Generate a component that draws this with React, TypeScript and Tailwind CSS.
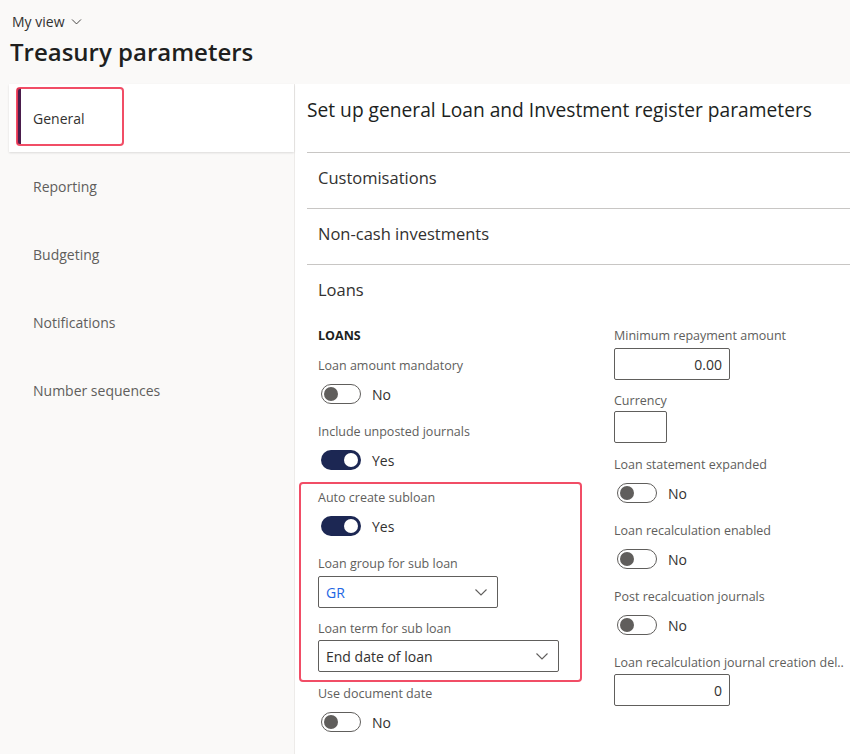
import React from 'react';

const FONT = { fontFamily: '"Segoe UI", "Open Sans", sans-serif' };

const Chevron = ({ className }: { className?: string }) => (
  <svg className={className} viewBox="0 0 16 16" fill="none" stroke="currentColor" strokeWidth="1.1">
    <path d="M2.5 5.5L8 11l5.5-5.5" />
  </svg>
);

const Toggle = ({ on }: { on: boolean }) => (
  <div className="flex items-center h-[20px] mt-[8px]">
    {on ? (
      <div className="w-[40px] h-[20px] rounded-full bg-[#1c2753] flex items-center justify-end pr-[3px] ml-[3px]">
        <div className="w-[14px] h-[14px] rounded-full bg-white" />
      </div>
    ) : (
      <div className="w-[40px] h-[20px] rounded-full border border-[#605e5c] flex items-center pl-[2px] ml-[3px]">
        <div className="w-[14px] h-[14px] rounded-full bg-[#605e5c]" />
      </div>
    )}
    <span className="ml-[11px] text-[14px] text-[#323130]">{on ? 'Yes' : 'No'}</span>
  </div>
);

const Label = ({ children }: { children: React.ReactNode }) => (
  <div className="h-[20px] leading-[20px] text-[12.5px] text-[#605e5c] whitespace-nowrap">{children}</div>
);

const ToggleField = ({ label, on, className }: { label: string; on: boolean; className?: string }) => (
  <div className={className}>
    <Label>{label}</Label>
    <Toggle on={on} />
  </div>
);

const NumberInput = ({ value, width }: { value: string; width: string }) => (
  <div className={`${width} h-[32px] border border-[#605e5c] rounded-[2px] flex items-center justify-end pr-[7px] text-[14px] text-[#323130]`}>
    {value}
  </div>
);

const Dropdown = ({ value, width, blue }: { value: string; width: string; blue?: boolean }) => (
  <div className={`${width} h-[32px] border border-[#605e5c] rounded-[2px] flex items-center justify-between pl-[7px] pr-[8px]`}>
    <span className={`text-[14px] ${blue ? 'text-[#2266e3]' : 'text-[#323130]'}`}>{value}</span>
    <Chevron className="w-[16px] h-[16px] text-[#605e5c]" />
  </div>
);

const navItems = ['Reporting', 'Budgeting', 'Notifications', 'Number sequences'];

export default function App() {
  return (
    <div className="w-[850px] h-[754px] bg-[#faf9f8] overflow-hidden flex flex-col" style={FONT}>
      <div className="pl-[12px] mt-[11px] flex items-center h-[20px] text-[14px] text-[#323130]">
        My view
        <Chevron className="w-[13px] h-[13px] ml-[6px] text-[#323130]" />
      </div>
      <div className="pl-[10px] h-[40px] leading-[40px] text-[24px] font-semibold text-[#201f1e] mt-[1px]">
        Treasury parameters
      </div>
      <div className="flex flex-1 mt-[12px]">
        <div className="w-[286px] ml-[9px] border-r border-[#edebe9] flex flex-col">
          <div className="relative h-[68px] bg-white shadow-[0_1px_2px_rgba(0,0,0,0.12)] flex items-center pl-[24px] text-[14px] text-[#323130]">
            <div className="absolute left-[8px] top-[4px] w-[4px] h-[56px] bg-[#4a1d4c]" />
            General
            <div className="absolute left-[7px] top-[3px] w-[108px] h-[59px] border-[2.5px] border-[#f03a55] rounded-[4px] opacity-90" />
          </div>
          {navItems.map((item) => (
            <div key={item} className="h-[68px] flex items-center pl-[24px] text-[14px] text-[#605e5c]">
              {item}
            </div>
          ))}
        </div>
        <div className="flex-1 bg-white pl-[12px] flex flex-col">
          <div className="h-[68px] pt-[14px] leading-[24px] text-[19.2px] text-[#201f1e] whitespace-nowrap">
            Set up general Loan and Investment register parameters
          </div>
          {['Customisations', 'Non-cash investments', 'Loans'].map((s) => (
            <div key={s} className="h-[56px] border-t border-[#c8c6c4] flex items-center pl-[11px] pb-[4px] text-[16.5px] text-[#323130]">
              {s}
            </div>
          ))}
          <div className="flex pl-[11px] pt-[6px]">
            <div className="w-[296px] flex flex-col">
              <div className="h-[20px] leading-[20px] text-[12.5px] font-bold text-[#201f1e] mb-[10px]">LOANS</div>
              <ToggleField label="Loan amount mandatory" on={false} className="mb-[18px]" />
              <ToggleField label="Include unposted journals" on={true} className="mb-[18px]" />
              <div className="relative">
                <ToggleField label="Auto create subloan" on={true} className="mb-[18px]" />
                <Label>Loan group for sub loan</Label>
                <div className="mt-[2px] mb-[11px]">
                  <Dropdown value="GR" width="w-[180px]" blue />
                </div>
                <Label>Loan term for sub loan</Label>
                <div className="mt-[1px]">
                  <Dropdown value="End date of loan" width="w-[241px]" />
                </div>
                <div className="absolute -left-[19px] -top-[6px] -bottom-[10px] right-[32px] border-[2.5px] border-[#f03a55] rounded-[4px] opacity-90" />
              </div>
              <ToggleField label="Use document date" on={false} className="mt-[12px]" />
            </div>
            <div className="flex flex-col">
              <Label>Minimum repayment amount</Label>
              <div className="mt-[2px] mb-[11px]">
                <NumberInput value="0.00" width="w-[116px]" />
              </div>
              <Label>Currency</Label>
              <div className="mb-[12px]">
                <NumberInput value="" width="w-[53px]" />
              </div>
              <ToggleField label="Loan statement expanded" on={false} className="mb-[18px]" />
              <ToggleField label="Loan recalculation enabled" on={false} className="mb-[18px]" />
              <ToggleField label="Post recalcuation journals" on={false} className="mb-[18px]" />
              <Label>Loan recalculation journal creation del..</Label>
              <div className="mt-[1px]">
                <NumberInput value="0" width="w-[116px]" />
              </div>
            </div>
          </div>
        </div>
      </div>
    </div>
  );
}
